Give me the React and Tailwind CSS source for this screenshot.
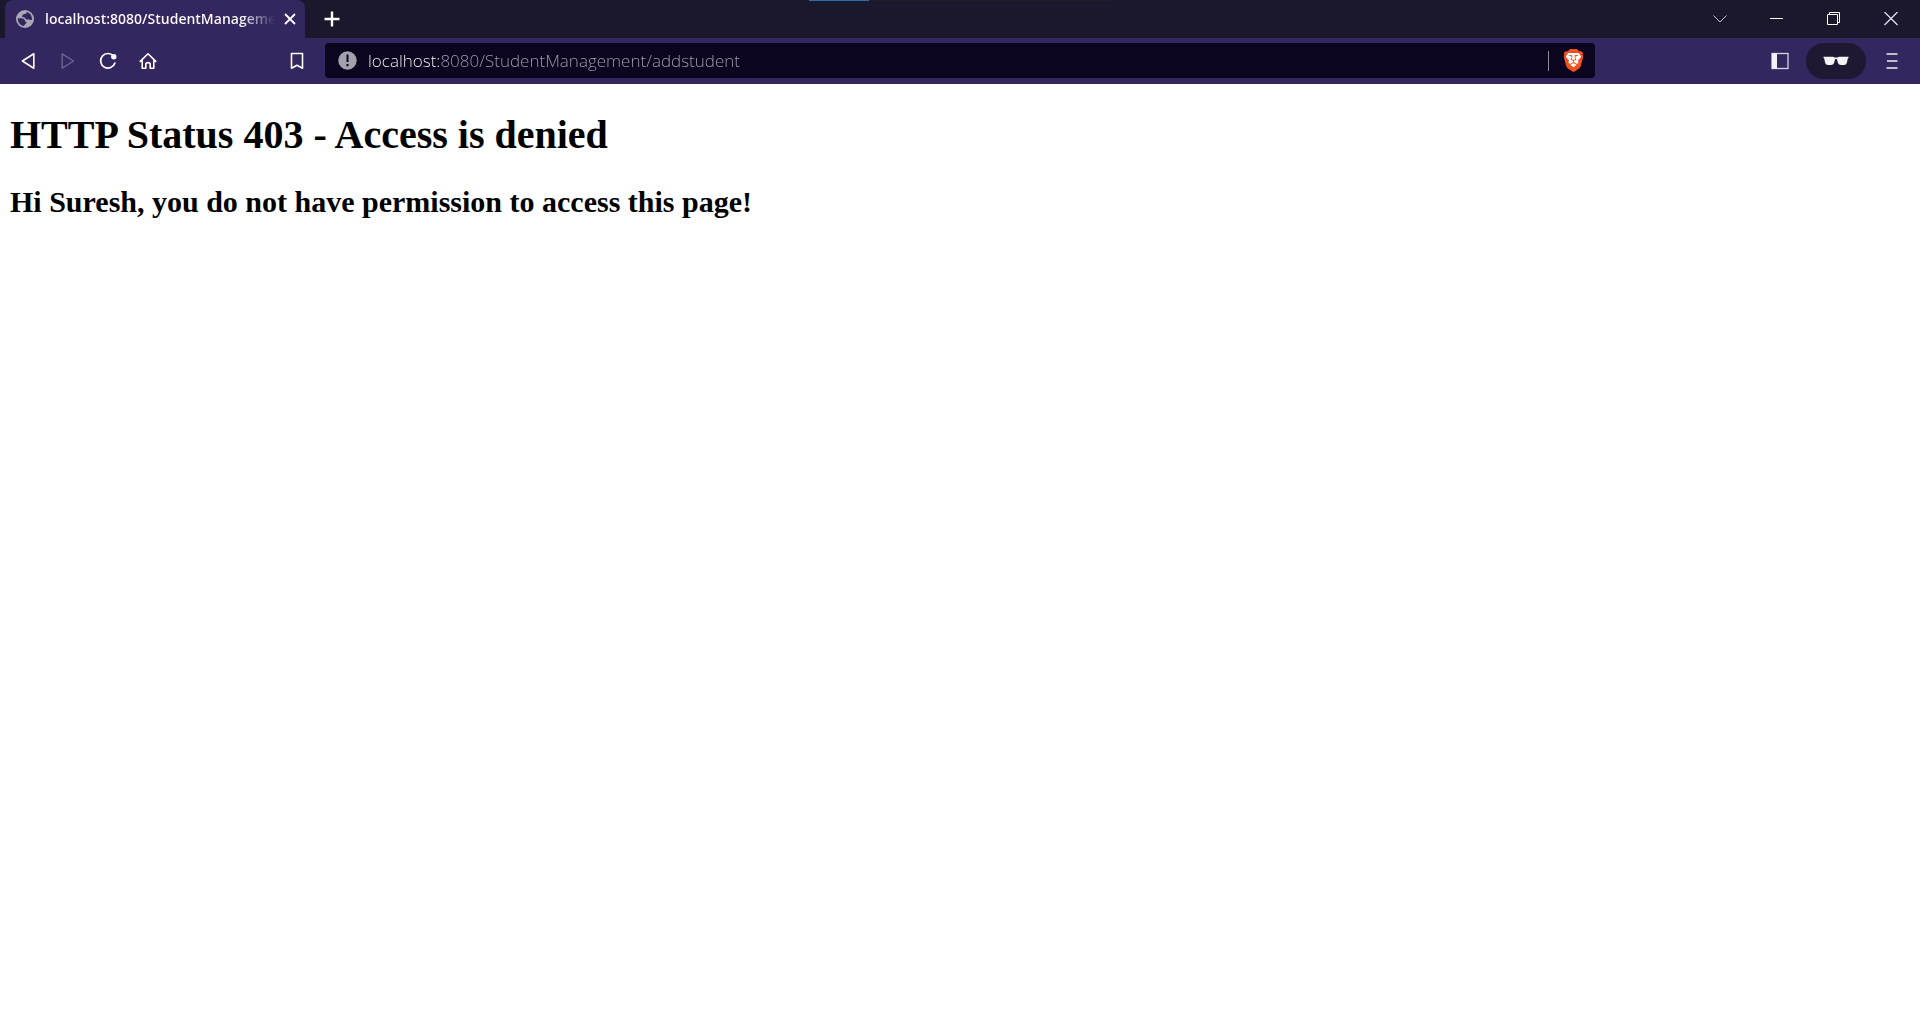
import React from "react";
import { SiBrave } from "react-icons/si";

function IconButton({ label, className = "w-10", children, ...rest }) {
  return (
    <button type="button" aria-label={label} className={`flex h-full shrink-0 items-center justify-center ${className}`} {...rest}>
      {children}
    </button>
  );
}

function Globe() {
  return (
    <svg width="18" height="18" viewBox="0 0 18 18" className="shrink-0" aria-hidden="true">
      <circle cx="9" cy="9" r="9" fill="#a9a7b4" />
      <path d="M10.8 2 C10.6 3.4 9.6 4 8.2 4 C6.8 4.2 7 5.4 6 5.8 C5.6 6.8 6.4 7.2 7.6 7.2 C9.4 7.2 9.2 9 10.4 9.4 C11.8 9.8 13.2 9.2 14 9.8 C14.8 10.2 15.6 9.8 16 9.4 C16.2 6 14 2.9 10.8 2 Z" fill="#34265f" />
      <path d="M1.9 8.2 H5.4 C7.6 8.4 9 9.4 9 11 C9 11.8 10.6 11.6 10.6 12.8 C10.4 13.8 9 13.6 8.8 14.6 C8.6 15.4 8.2 15.8 7.4 15.9 C3.8 15 1.6 12 1.9 8.2 Z" fill="#34265f" />
    </svg>
  );
}

function BraveShield() {
  return (
    <svg width="23" height="23" viewBox="0 0 24 24" aria-hidden="true">
      <path d="M5 4 H19 L20 8 L17 18 L12 22 L7 18 L4 8 Z" fill="#ffffff" />
      <SiBrave size={24} color="#f4511e" />
    </svg>
  );
}

function TitleBar() {
  return (
    <div className="relative flex h-[38px] bg-[#1b182e] pl-[5px] text-white">
      <div className="flex w-[300px] items-center rounded-t-lg bg-[#34265f] pl-[11px]">
        <Globe />
        <span className="ml-[11px] w-[230px] whitespace-nowrap bg-linear-to-r from-white from-85% to-transparent to-100% bg-clip-text pb-0.5 text-[14px] font-semibold text-transparent">
          localhost:8080/StudentManageme
        </span>
        <IconButton label="Close tab" className="w-[30px]">
          <svg width="12" height="12" viewBox="0 0 12 12" stroke="#fff" strokeWidth="1.8" aria-hidden="true">
            <path d="M1 1 L11 11 M11 1 L1 11" />
          </svg>
        </IconButton>
      </div>
      <IconButton label="New tab" className="ml-2 w-[38px]">
        <svg width="16" height="16" viewBox="0 0 16 16" stroke="#fff" strokeWidth="2.4" aria-hidden="true">
          <path d="M8 0.5 V15.5 M0.5 8 H15.5" />
        </svg>
      </IconButton>
      <div className="absolute left-1/2 top-0 h-px w-[302px] -translate-x-1/2 bg-[#202024]">
        <div className="h-px w-[60px] bg-[#2a6ca8]" />
      </div>
      <IconButton label="Search tabs" className="ml-auto w-[57px]">
        <svg width="14" height="8" viewBox="0 0 14 8" fill="none" stroke="#c9c7d2" aria-hidden="true">
          <path d="M0.5 0.5 L7 7 L13.5 0.5" />
        </svg>
      </IconButton>
      <IconButton label="Minimize" className="w-[57px]">
        <svg width="13" height="12" viewBox="0 0 13 12" stroke="#fff" aria-hidden="true">
          <path d="M0 5.5 H13" />
        </svg>
      </IconButton>
      <IconButton label="Restore" className="w-[57px]">
        <svg width="13" height="14" viewBox="0 0 13 14" fill="none" stroke="#fff" aria-hidden="true">
          <path d="M0.5 2.5 H10.5 V12.5 H0.5 Z M2.5 2.5 V0.5 H12.5 V10.5 H10.5" />
        </svg>
      </IconButton>
      <IconButton label="Close window" className="w-[58px]">
        <svg width="14" height="14" viewBox="0 0 14 14" stroke="#e9e8ee" strokeWidth="1.2" aria-hidden="true">
          <path d="M0.5 0 L13.5 13 M13.5 0 L0.5 13" />
        </svg>
      </IconButton>
    </div>
  );
}

function Toolbar() {
  return (
    <div className="flex h-[46px] items-center bg-[#34265f] pb-px">
      <div className="flex h-full w-[325px] shrink-0 items-center px-2">
        <IconButton label="Back">
          <svg width="14" height="18" viewBox="0 0 14 18" fill="none" stroke="#fff" strokeWidth="1.6" strokeLinejoin="round" aria-hidden="true">
            <path d="M12.8 1.8 V16.2 L1.4 9 Z" />
          </svg>
        </IconButton>
        <IconButton label="Forward" disabled>
          <svg width="14" height="18" viewBox="0 0 14 18" fill="none" stroke="#6f6492" strokeWidth="1.4" strokeLinejoin="round" aria-hidden="true">
            <path d="M1.2 1.8 V16.2 L12.6 9 Z" />
          </svg>
        </IconButton>
        <IconButton label="Reload">
          <svg width="18" height="18" viewBox="0 0 18 18" fill="none" aria-hidden="true">
            <path d="M14.6 4.2 A7.3 7.3 0 1 0 15.9 11" stroke="#fff" strokeWidth="1.7" strokeLinecap="round" />
            <circle cx="14.8" cy="4.8" r="2.7" fill="#fff" />
          </svg>
        </IconButton>
        <IconButton label="Home">
          <svg width="18" height="18" viewBox="0 0 18 18" fill="none" stroke="#fff" strokeWidth="1.6" strokeLinecap="round" strokeLinejoin="round" aria-hidden="true">
            <path d="M1.2 9.4 L9 1.8 L16.8 9.4 M3.2 8 V16.2 H6.8 V12.6 Q6.8 10.6 9 10.6 Q11.2 10.6 11.2 12.6 V16.2 H14.8 V8" />
          </svg>
        </IconButton>
        <IconButton label="Bookmark this page" className="ml-auto w-10">
          <svg width="14" height="18" viewBox="0 0 14 18" fill="none" stroke="#fff" strokeWidth="1.6" strokeLinejoin="round" aria-hidden="true">
            <path d="M1.5 1.5 H12.5 V16.2 L7 13.2 L1.5 16.2 Z" />
          </svg>
        </IconButton>
      </div>

      <div className="flex h-[35px] min-w-0 flex-1 items-center rounded-[4px] bg-[#0b0520] pl-[13px]">
        <button type="button" aria-label="Site information">
          <svg width="19" height="19" viewBox="0 0 19 19" aria-hidden="true">
            <circle cx="9.5" cy="9.5" r="9.2" fill="#a3a1ad" />
            <path d="M9.5 3.6 V11 M9.5 13 V15.2" stroke="#0b0520" strokeWidth="2" />
          </svg>
        </button>
        <input
          type="text"
          aria-label="Address"
          spellCheck={false}
          defaultValue="localhost:8080/StudentManagement/addstudent"
          className="ml-[11px] h-7 min-w-0 flex-1 bg-linear-to-r from-white from-[71px] to-[#a3a0ad] to-[71px] bg-clip-text text-[17px] font-light text-transparent outline-none"
        />
        <div className="h-5 w-px bg-[#8d8a99]" />
        <button type="button" aria-label="Brave Shields" className="ml-[13px] mr-[10px]">
          <BraveShield />
        </button>
      </div>

      <div className="flex h-full w-[325px] shrink-0 items-center justify-end gap-[6px] pr-2">
        <IconButton label="Toggle sidebar">
          <svg width="18" height="18" viewBox="0 0 18 18" aria-hidden="true">
            <rect x="1" y="1.5" width="16" height="15" fill="none" stroke="#d9d6e3" strokeWidth="1.3" />
            <path d="M1 1.5 H6 V16.5 H1 Z" fill="#f2f1f5" />
          </svg>
        </IconButton>
        <button type="button" aria-label="Private window" className="flex h-9 w-[60px] items-center justify-center rounded-full bg-[#1e1833]">
          <svg width="26" height="10" viewBox="0 0 26 10" fill="#f4f3f6" aria-hidden="true">
            <path d="M0.5 0.8 V2 L1.2 2.6 L2.2 7 Q2.8 9 4.8 9 H8 Q10.4 9 11 7 L12.2 3 H13.8 L15 7 Q15.6 9 18 9 H21.2 Q23.2 9 23.8 7 L24.8 2.6 L25.5 2 V0.8 H16 L14.5 1.5 H11.5 L10 0.8 Z" />
          </svg>
        </button>
        <IconButton label="Menu">
          <svg width="12" height="18" viewBox="0 0 12 18" stroke="#f0eff4" strokeWidth="1.7" aria-hidden="true">
            <path d="M0.5 2 H11.5 M1 9 H11.5 M0.5 16 H11.5" />
          </svg>
        </IconButton>
      </div>
    </div>
  );
}

export default function App() {
  return (
    <div className="min-h-screen bg-white font-['Open_Sans','Noto_Sans',sans-serif]">
      <header>
        <TitleBar />
        <Toolbar />
      </header>
      <main className="px-[10px] pt-7 font-['Liberation_Serif',serif] font-bold text-black">
        <h1 className="text-[40px] leading-[46px]">HTTP Status 403 - Access is denied</h1>
        <h2 className="mt-[27px] text-[30px] leading-[34px]">Hi Suresh, you do not have permission to access this page!</h2>
      </main>
    </div>
  );
}
